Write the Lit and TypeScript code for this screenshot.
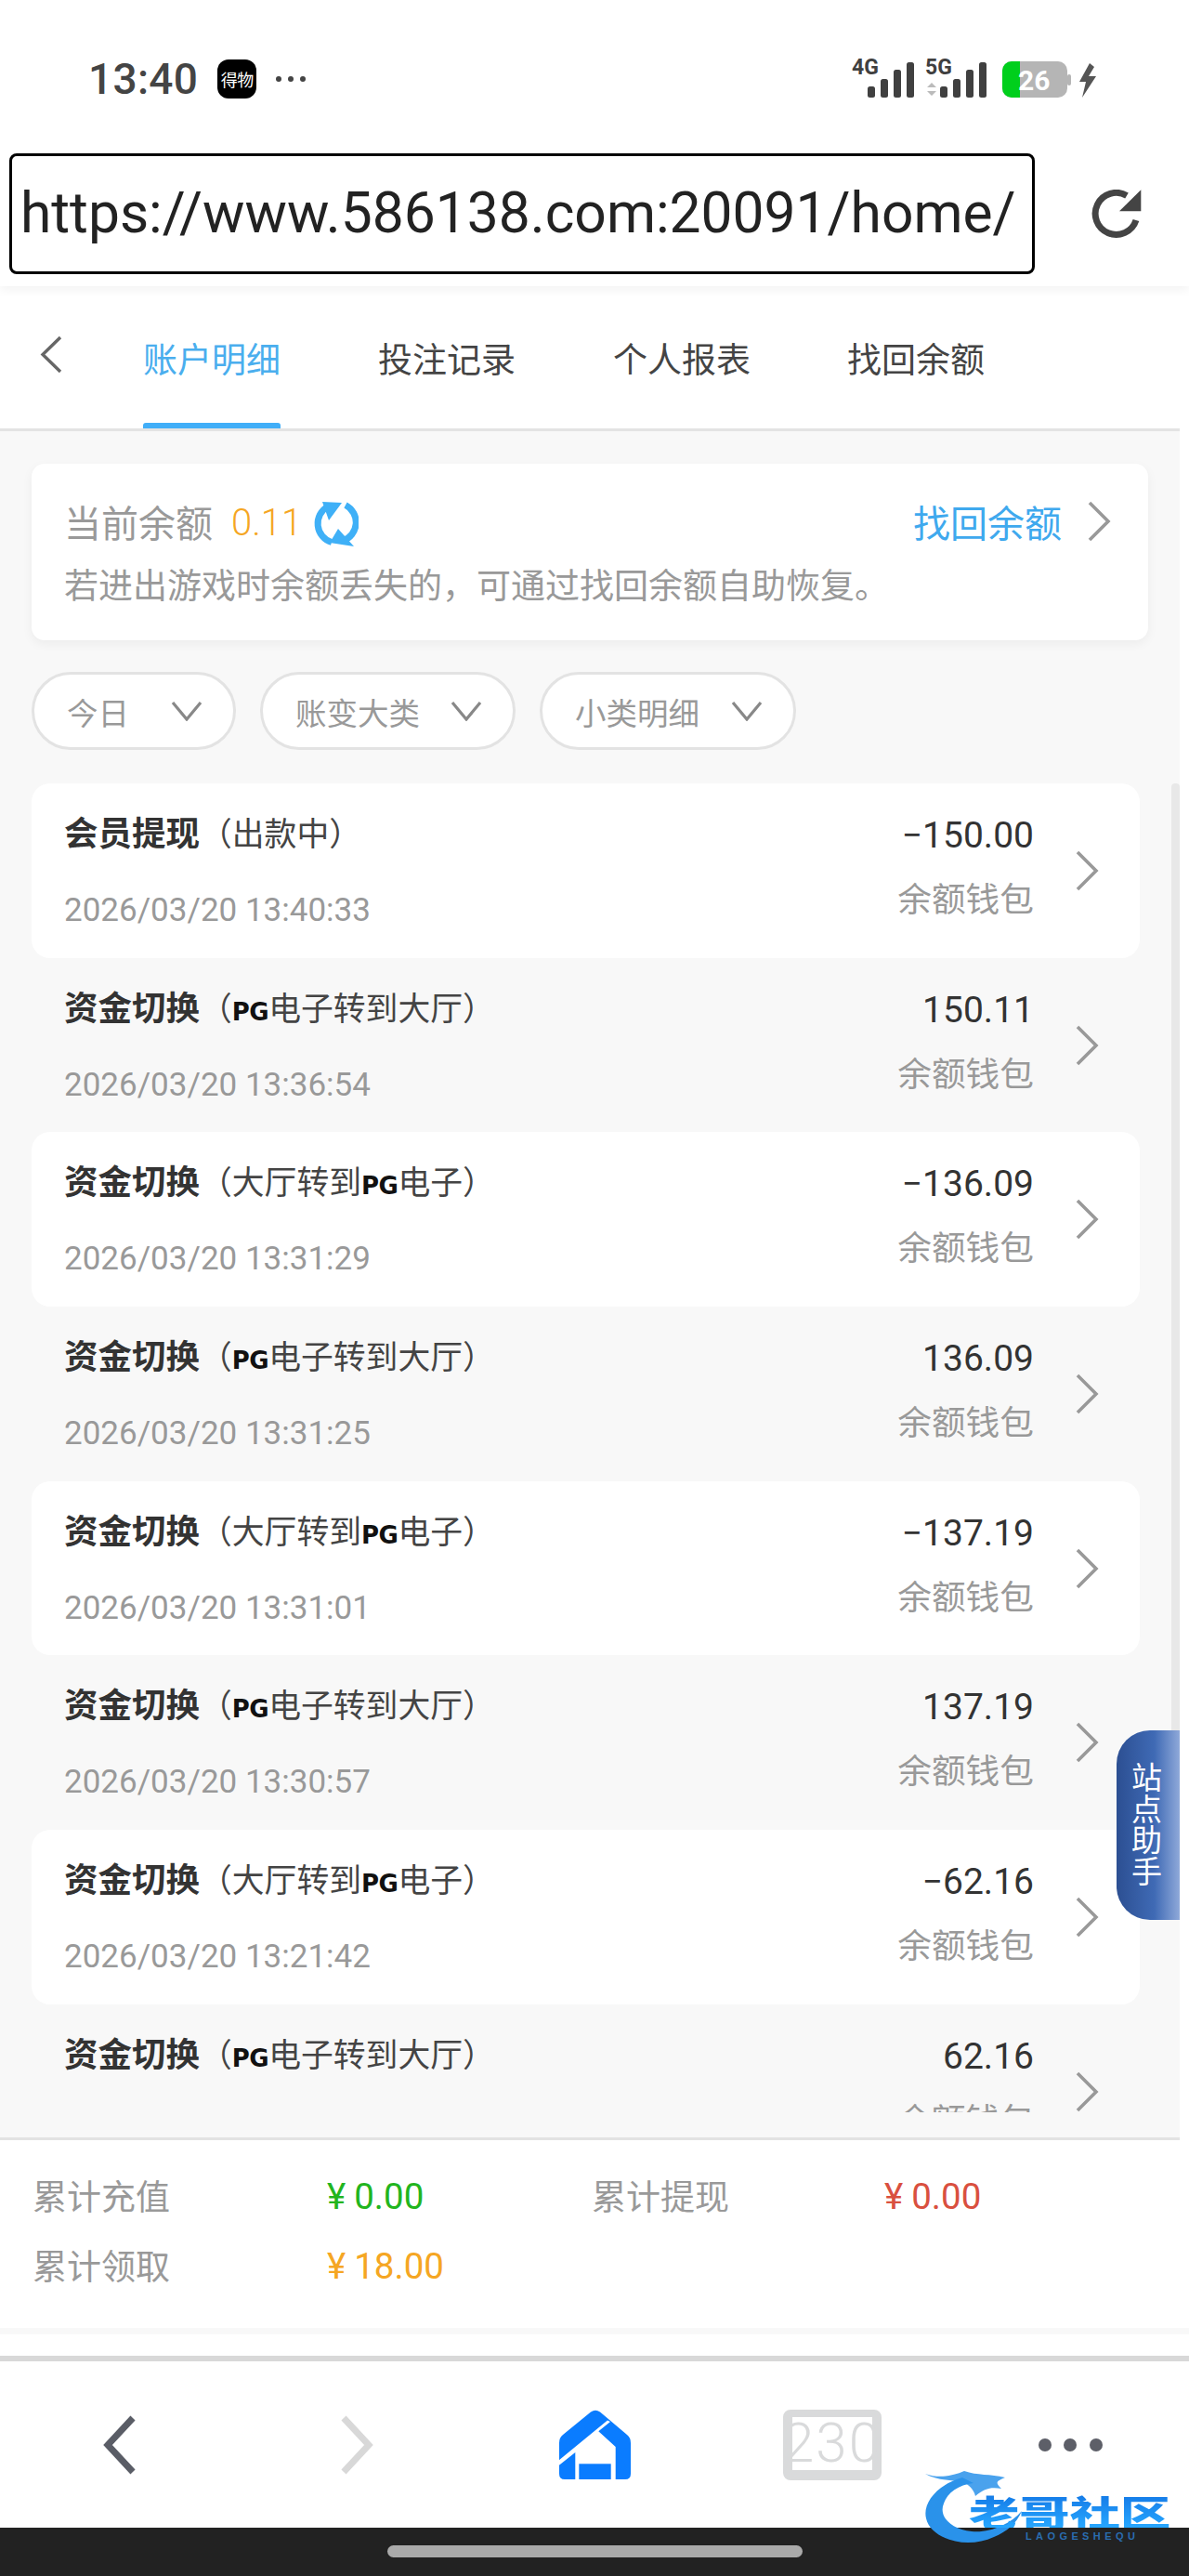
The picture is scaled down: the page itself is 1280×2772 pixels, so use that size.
import { LitElement, html, css, svg } from "lit";
import { customElement } from "lit/decorators.js";

type Row = { kind: string; sub: unknown; time: string; amt: string };

const pg = html`<span class="pg">PG</span>`;
const toHall = html`（${pg}电子转到大厅）`;
const toPg = html`（大厅转到${pg}电子）`;

const ROWS: Row[] = [
  { kind: "会员提现", sub: "（出款中）", time: "2026/03/20 13:40:33", amt: "−150.00" },
  { kind: "资金切换", sub: toHall, time: "2026/03/20 13:36:54", amt: "150.11" },
  { kind: "资金切换", sub: toPg, time: "2026/03/20 13:31:29", amt: "−136.09" },
  { kind: "资金切换", sub: toHall, time: "2026/03/20 13:31:25", amt: "136.09" },
  { kind: "资金切换", sub: toPg, time: "2026/03/20 13:31:01", amt: "−137.19" },
  { kind: "资金切换", sub: toHall, time: "2026/03/20 13:30:57", amt: "137.19" },
  { kind: "资金切换", sub: toPg, time: "2026/03/20 13:21:42", amt: "−62.16" },
  { kind: "资金切换", sub: toHall, time: "", amt: "62.16" },
];

const chevR = html`<svg class="chev" viewBox="0 0 26 44" fill="none"><path d="M3 2 L23 22 L3 42" stroke="#999" stroke-width="3.6"/></svg>`;
const chevD = html`<svg class="chevd" viewBox="0 0 34 22" fill="none"><path d="M2 2 L17 20 L32 2" stroke="#888" stroke-width="3.2"/></svg>`;

const bars = (x: number) => svg`
  <rect x="${x}" y="31" width="8" height="12" rx="2.5"/>
  <rect x="${x + 14}" y="23" width="8" height="20" rx="2.5"/>
  <rect x="${x + 28}" y="13" width="8" height="30" rx="2.5"/>
  <rect x="${x + 42}" y="5" width="8" height="38" rx="2.5"/>`;

@customElement("app-root")
export class AppRoot extends LitElement {
  static styles = css`
    :host {
      display: flex;
      flex-direction: column;
      position: relative;
      width: 1280px;
      height: 2772px;
      overflow: hidden;
      background: #fff;
      font-family: Roboto, "Noto Sans CJK SC", sans-serif;
      color: #333;
    }
    .top { height: 308px; flex: none; background: #fff; position: relative; z-index: 2; box-shadow: 0 4px 10px rgba(0,0,0,.05); }
    .status { height: 165px; display: flex; align-items: center; justify-content: space-between; padding: 0 95px 0 95px; box-sizing: border-box; }
    .status-l { display: flex; align-items: center; margin-top: 5px; }
    .clock { font-size: 46px; font-weight: 500; color: #444; letter-spacing: 0.3px; line-height: 50px; }
    .dw { width: 42px; height: 42px; margin-left: 21px; border-radius: 12px; background: #000; color: #fff; font-size: 18px; display: flex; align-items: center; justify-content: center; letter-spacing: -.5px; }
    .sdots { display: flex; gap: 7px; margin-left: 21px; }
    .sdots i { width: 6px; height: 6px; border-radius: 50%; background: #444; }
    .sicons { width: 270px; height: 46px; margin-top: 5px; display: block; overflow: visible; }
    .urlrow { display: flex; align-items: flex-start; padding-left: 10px; }
    .url { width: 1104px; height: 130px; box-sizing: border-box; border: 3px solid #000; border-radius: 8px; display: flex; align-items: center; padding-left: 9px; font-size: 60.5px; color: #222; white-space: nowrap; letter-spacing: 0; line-height: 1; }
    .reload { width: 54px; height: 54px; margin: 39px 0 0 61px; }
    .body { flex: 1; width: 1270px; background: #f8f8f8; display: flex; flex-direction: column; min-height: 0; }
    .tabs { height: 156px; flex: none; box-sizing: border-box; background: #fff; border-bottom: 3px solid #e3e3e3; display: flex; align-items: center; padding-left: 42px; }
    .back { width: 25px; height: 41px; margin: -6px 87px 0 0; }
    .tab { position: relative; align-self: stretch; display: flex; align-items: center; width: 148px; margin-right: 105px; font-size: 37px; color: #444; }
    .tab:last-child { margin-left: -1px; }
    .tab.on { color: #4aaeee; }
    .tab.on::after { content: ""; position: absolute; left: 0; right: 0; bottom: 0; height: 6px; border-radius: 3px 3px 0 0; background: #41aef8; }
    .card { margin: 35px 34px 0; height: 190px; flex: none; box-sizing: border-box; padding: 41px 0 0 35px; background: #fff; border-radius: 14px; box-shadow: 0 4px 12px rgba(0,0,0,.05); }
    .bal { display: flex; align-items: center; height: 44px; font-size: 40px; color: #999; }
    .lab { margin-top: -2px; }
    .val { color: #f5a623; margin-left: 20px; width: 68px; font-weight: 300; white-space: nowrap; }
    .spin { width: 49px; height: 51px; margin-left: 20px; }
    .find { margin: -3px 0 0 auto; color: #3fa9ee; }
    .bal .chev { margin: -2px 40px 0 27px; }
    .desc { margin-top: 26px; line-height: 44px; font-size: 37px; color: #999; white-space: nowrap; }
    .filters { display: flex; padding: 34px 0 0 34px; flex: none; gap: 26px; }
    .filter { height: 84px; box-sizing: border-box; border: 3px solid #e3e3e3; background: #fff; border-radius: 42px; display: flex; align-items: center; justify-content: space-between; padding: 0 33px 0 35px; font-size: 33.5px; color: #999; }
    .f1 { width: 220px; } .f2 { width: 275px; } .f3 { width: 276px; }
    .chevd { width: 34px; height: 22px; }
    .list { height: 1430px; margin-top: 36px; overflow: hidden; flex: none; }
    .row { height: 187.7px; margin: 0 43px 0 34px; padding-right: 44px; box-sizing: border-box; border-radius: 20px; display: flex; align-items: center; }
    .row:nth-child(odd) { background: #fff; }
    .left { flex: 1; align-self: stretch; padding: 33px 0 0 35px; }
    .title { height: 44px; line-height: 44px; font-size: 34.8px; color: #444; white-space: nowrap; }
    .title b { font-size: 36.5px; font-weight: 700; color: #333; }
    .time { margin-top: 38px; line-height: 44px; font-size: 35px; color: #999; }
    .pg { font-family: "DejaVu Sans", sans-serif; font-weight: 700; font-size: 26px; line-height: 1; color: #111; letter-spacing: -.5px; }
    .right { align-self: stretch; text-align: right; padding-top: 34px; margin-right: 44px; }
    .amt { line-height: 44px; font-size: 39px; color: #333; }
    .wal { margin-top: 26px; line-height: 44px; font-size: 36.7px; color: #999; }
    .chev { width: 26px; height: 44px; flex: none; }
    .stats { margin-top: 27px; flex: none; height: 205px; box-sizing: border-box; background: #fff; border-top: 3px solid #e3e3e3; padding: 23px 0 0 35px; display: grid; grid-template-columns: 317px 285px 315px 1fr; grid-auto-rows: 75px; align-items: center; font-size: 37px; color: #999; }
    .lbl { margin-top: -4px; }
    .amtv { font-size: 38.5px; }
    .green { color: #22b51e; } .red { color: #d9503f; } .orange { color: #f5a623; }
    .yen { margin-right: 9px; }
    .band { height: 7px; flex: none; background: #f8f8f8; }
    .gapw { height: 23px; flex: none; background: #fff; }
    .nav { height: 185px; flex: none; box-sizing: border-box; border-top: 6px solid #d8d8d8; background: #fff; display: grid; grid-template-columns: repeat(5, 1fr); align-items: center; justify-items: center; }
    .nav svg { display: block; }
    .tabsbox { width: 106px; height: 76px; box-sizing: border-box; border: solid #d9dadb; border-width: 8px 10px 11px; border-radius: 8px; display: flex; align-items: center; justify-content: center; color: #d9dadb; font-size: 60px; font-weight: 300; letter-spacing: 2px; line-height: 1; white-space: nowrap; overflow: visible; }
    .ndots { display: flex; gap: 13.5px; }
    .ndots i { width: 14px; height: 14px; border-radius: 50%; background: #5d5f68; }
    .gesture { height: 52px; flex: none; background: #222; display: flex; justify-content: center; padding-top: 19px; box-sizing: border-box; }
    .gesture i { width: 447px; height: 13px; border-radius: 7px; background: #aaa; }
    .sbar { position: absolute; left: 1261px; top: 843px; width: 9px; height: 1100px; background: #e8e8e8; border-radius: 4px 4px 0 0; }
    .helper { position: absolute; left: 1202px; top: 1862px; width: 68px; height: 204px; box-sizing: border-box; border-radius: 36px 0 0 36px; background: linear-gradient(90deg, #2c4f92, #3f6ab5 60%, #8fa9d9); color: #fff; font-size: 33px; line-height: 33.5px; display: flex; flex-direction: column; align-items: center; justify-content: center; z-index: 3; }
    .helper span { margin-left: -3px; }
    .mark { position: absolute; left: 990px; top: 2650px; width: 290px; height: 92px; z-index: 4; }
    .mark svg { position: absolute; inset: 0; width: 290px; height: 92px; }
    .mark-cn { position: absolute; left: 53px; top: 33px; width: 151px; height: 37px; overflow: hidden; font-family: "Noto Sans CJK SC", sans-serif; font-weight: 900; font-size: 38px; line-height: 37px; white-space: nowrap; transform: scaleX(1.43); transform-origin: left center; background: linear-gradient(180deg, #1479e6, #27a7ff); -webkit-background-clip: text; background-clip: text; color: transparent; }
    .mark-en { position: absolute; left: 114px; top: 73px; font-family: "Liberation Sans", sans-serif; font-weight: 700; font-size: 11px; letter-spacing: 4.4px; line-height: 12px; color: #2a6db0; white-space: nowrap; }
  `;

  render() {
    return html`
      <div class="top">
        <div class="status">
          <div class="status-l">
            <span class="clock">13:40</span>
            <span class="dw">得物</span>
            <span class="sdots"><i></i><i></i><i></i></span>
          </div>
          <svg class="sicons" viewBox="0 0 270 46">
            <g fill="#404040">
              <text x="2" y="18" font-family="Roboto" font-weight="700" font-size="23">4G</text>
              <text x="81" y="18" font-family="Roboto" font-weight="700" font-size="23">5G</text>
              ${bars(19)} ${bars(97)}
            </g>
            <path d="M83 29 L88 24 L93 29 Z M83 33 L88 38 L93 33 Z" fill="#bbb" transform="translate(0 3)"/>
            <rect x="164" y="4" width="70" height="39" rx="10" fill="#b5b5b5"/>
            <rect x="234" y="18" width="4" height="12" rx="2" fill="#b5b5b5"/>
            <path d="M174 4 H183 V43 H174 A10 10 0 0 1 164 33 V14 A10 10 0 0 1 174 4 Z" fill="#00cf1c"/>
            <text x="181" y="35" font-family="Roboto" font-weight="700" font-size="30" fill="#fff">26</text>
            <path d="M258 6 L247 26 L254 26 L250 43 L265 20 L257 20 L263 10 Z" fill="#555"/>
          </svg>
        </div>
        <div class="urlrow">
          <div class="url">https://www.586138.com:20091/home/</div>
          <svg class="reload" viewBox="5 9 54 54" fill="none">
            <path d="M53 42 A22.5 22.5 0 1 1 43 15.5" stroke="#444" stroke-width="7"/>
            <path d="M58.3 9.3 V32.3 H35 Z" fill="#444"/>
          </svg>
        </div>
      </div>

      <div class="body">
        <div class="tabs">
          <svg class="back" viewBox="0 0 25 41" fill="none"><path d="M23 2 L4 20.5 L23 39" stroke="#666" stroke-width="3.4"/></svg>
          <div class="tab on">账户明细</div>
          <div class="tab">投注记录</div>
          <div class="tab">个人报表</div>
          <div class="tab">找回余额</div>
        </div>

        <div class="card">
          <div class="bal">
            <span class="lab">当前余额</span>
            <span class="val">0.11</span>
            <svg class="spin" viewBox="8 9 49 51" fill="none">
              <path d="M24 17 A21 21 0 0 0 28 55.5" stroke="#3fb0f7" stroke-width="7"/>
              <path d="M43 15.5 A21 21 0 0 1 40 54" stroke="#3fb0f7" stroke-width="7"/>
              <path d="M18 12 L39 13 L25 32 Z M52 60 L26 56 L35 41 Z" fill="#3fb0f7"/>
            </svg>
            <span class="find">找回余额</span>
            ${chevR}
          </div>
          <div class="desc">若进出游戏时余额丢失的，可通过找回余额自助恢复。</div>
        </div>

        <div class="filters">
          <div class="filter f1">今日${chevD}</div>
          <div class="filter f2">账变大类${chevD}</div>
          <div class="filter f3">小类明细${chevD}</div>
        </div>

        <div class="list">
          ${ROWS.map(
            (r) => html`<div class="row">
              <div class="left">
                <div class="title"><b>${r.kind}</b>${r.sub}</div>
                <div class="time">${r.time}</div>
              </div>
              <div class="right">
                <div class="amt">${r.amt}</div>
                <div class="wal">余额钱包</div>
              </div>
              ${chevR}
            </div>`
          )}
        </div>

        <div class="stats">
          <span class="lbl">累计充值</span><span class="amtv green"><span class="yen">¥</span>0.00</span>
          <span class="lbl">累计提现</span><span class="amtv red"><span class="yen">¥</span>0.00</span>
          <span class="lbl">累计领取</span><span class="amtv orange"><span class="yen">¥</span>18.00</span>
        </div>
      </div>
      <div class="band"></div>
      <div class="gapw"></div>

      <div class="nav">
        <svg width="37" height="64" viewBox="0 0 37 64" fill="none"><path d="M33 3 L6 32 L33 61" stroke="#5a5d66" stroke-width="7"/></svg>
        <svg width="37" height="64" viewBox="0 0 37 64" fill="none"><path d="M4 3 L31 32 L4 61" stroke="#d8d8d8" stroke-width="7"/></svg>
        <svg width="79" height="76" viewBox="0 0 79 76">
          <path d="M35 2.5 Q40 -1 45 2.5 L74 27 Q78 30 78 36 V69 Q78 75 72 75 H7 Q1 75 1 69 V36 Q1 30 5 27 Z" fill="#0a7cff"/>
          <path d="M0 55 L53 11.5 L56 13 L43.3 23.3 L61.7 40 V76 H18.3 V46 L0 60.5 Z" fill="#fff"/>
          <rect x="22.3" y="58.3" width="34.4" height="16.7" fill="#0a7cff"/>
        </svg>
        <div class="tabsbox">230</div>
        <div class="ndots"><i></i><i></i><i></i></div>
      </div>
      <div class="gesture"><i></i></div>

      <div class="sbar"></div>
      <div class="helper"><span>站</span><span>点</span><span>助</span><span>手</span></div>

      <div class="mark">
        <svg viewBox="0 0 290 92">
          <path d="M46 16 C18 24 3 44 7 60 C12 82 50 94 80 80 C94 74 104 66 110 52 C98 66 76 76 56 74 C34 72 20 58 26 44 C30 32 42 24 58 22 Z" fill="#2a92ea"/>
          <path d="M6 12 C20 17 34 15 48 9 C62 14 76 12 92 16 C84 20 80 20 88 28 C76 26 70 28 60 36 C58 28 52 22 42 20 C30 19 16 18 6 12 Z" fill="#2a92ea" opacity=".85"/>
        </svg>
        <div class="mark-cn">老哥社区</div>
        <div class="mark-en">LAOGESHEQU</div>
      </div>
    `;
  }
}
